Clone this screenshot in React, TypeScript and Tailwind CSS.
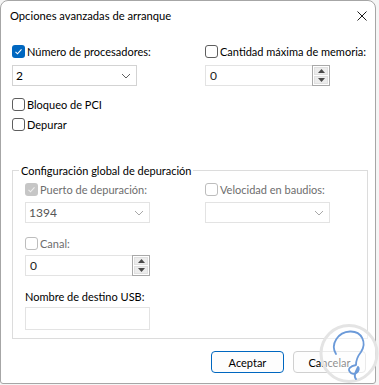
import React from "react";

function Box({ checked = false, disabled = false }: { checked?: boolean; disabled?: boolean }) {
  if (checked) {
    return (
      <span
        className={`w-[13px] h-[13px] rounded-[3px] flex items-center justify-center shrink-0 ${
          disabled ? "bg-[#c6c6c6]" : "bg-[#0067c0]"
        }`}
      >
        <svg width="9" height="9" viewBox="0 0 9 9">
          <polyline points="1.5,4.8 3.5,6.8 7.5,2.3" fill="none" stroke={disabled ? "#eeeeee" : "#ffffff"} strokeWidth="1.1" />
        </svg>
      </span>
    );
  }
  return (
    <span
      className={`w-[13px] h-[13px] rounded-[3px] border bg-white shrink-0 ${
        disabled ? "border-[#bdbdbd]" : "border-[#5e5e5e]"
      }`}
    />
  );
}

function CheckRow({
  label,
  checked,
  disabled,
}: {
  label: string;
  checked?: boolean;
  disabled?: boolean;
}) {
  return (
    <div className="h-[15px] flex items-center gap-[2px] whitespace-nowrap">
      <Box checked={checked} disabled={disabled} />
      <span className={`leading-[15px] ${disabled ? "text-[#6d6d6d]" : "text-black"}`}>{label}</span>
    </div>
  );
}

function Chevron({ light = false }: { light?: boolean }) {
  return (
    <svg width="10" height="6" viewBox="0 0 10 6">
      <polyline points="1,1 5,5 9,1" fill="none" stroke={light ? "#a8a8a8" : "#606060"} strokeWidth="1" />
    </svg>
  );
}

function Select({ value, disabled = false }: { value: string; disabled?: boolean }) {
  return (
    <div
      className={`w-[125px] h-[21px] border flex items-center justify-between pl-[3px] pr-[5px] bg-white ${
        disabled ? "border-[#e3e3e3] text-[#555555]" : "border-[#d3d3d3] text-black"
      }`}
    >
      <span className="leading-[15px] text-[12px]">{value}</span>
      <Chevron light={disabled} />
    </div>
  );
}

function Tri({ up }: { up: boolean }) {
  return (
    <svg width="7" height="4" viewBox="0 0 7 4">
      <polygon points={up ? "3.5,0 7,4 0,4" : "0,0 7,0 3.5,4"} fill="#4a4a4a" />
    </svg>
  );
}

function Spin({ value }: { value: string }) {
  return (
    <div className="w-[125px] h-[21px] flex bg-white">
      <div className="flex-1 border border-r-0 border-[#e3e3e3] flex items-center pl-[4px]">
        <span className="leading-[15px] text-[12px] text-[#222]">{value}</span>
      </div>
      <div className="w-[18px] border border-[#a9a9a9] flex flex-col gap-[1px] p-[1px] bg-white">
        <div className="flex-1 bg-[#ececec] border border-[#e0e0e0] flex items-center justify-center">
          <Tri up />
        </div>
        <div className="flex-1 bg-[#ececec] border border-[#e0e0e0] flex items-center justify-center">
          <Tri up={false} />
        </div>
      </div>
    </div>
  );
}

export default function App() {
  return (
    <div
      className="w-[379px] h-[385px] bg-[#f5f5f5] relative overflow-hidden text-[11px] text-black"
      style={{ fontFamily: 'Lato, "Liberation Sans", Arial, sans-serif' }}
    >
      <div className="w-[376px] h-[384px] bg-white border border-[#a6a6a6] rounded-t-[8px] rounded-b-[3px] flex flex-col">
        {/* Title bar */}
        <div className="h-[29px] flex items-center justify-between pl-[9px] pr-[8px]">
          <span className="leading-[15px] text-[11.2px]">Opciones avanzadas de arranque</span>
          <svg width="10" height="10" viewBox="0 0 10 10">
            <path d="M0.5 0.5 L9.5 9.5 M9.5 0.5 L0.5 9.5" stroke="#1a1a1a" strokeWidth="1" />
          </svg>
        </div>

        {/* Top options */}
        <div className="grid grid-cols-[193px_1fr] pl-[11px] pt-[14px]">
          <div className="flex flex-col">
            <CheckRow label="Número de procesadores:" checked />
            <div className="mt-[6px]">
              <Select value="2" />
            </div>
            <div className="mt-[11px]">
              <CheckRow label="Bloqueo de PCI" />
            </div>
            <div className="mt-[5px]">
              <CheckRow label="Depurar" />
            </div>
          </div>
          <div className="flex flex-col">
            <CheckRow label="Cantidad máxima de memoria:" />
            <div className="mt-[6px]">
              <Spin value="0" />
            </div>
          </div>
        </div>

        {/* Group box */}
        <div className="relative ml-[11px] mt-[38px] w-[356px] border border-[#dcdcdc] pt-[11px] pb-[8px] pl-[12px]">
          <span className="absolute left-[6px] -top-[8px] px-[2px] bg-white leading-[15px] whitespace-nowrap">
            Configuración global de depuración
          </span>
          <div className="grid grid-cols-[180px_1fr]">
            <div className="flex flex-col">
              <CheckRow label="Puerto de depuración:" checked disabled />
              <div className="mt-[5px]">
                <Select value="1394" disabled />
              </div>
              <div className="mt-[13px]">
                <CheckRow label="Canal:" disabled />
              </div>
              <div className="mt-[4px]">
                <Spin value="0" />
              </div>
              <div className="mt-[13px] h-[15px] leading-[15px] whitespace-nowrap">Nombre de destino USB:</div>
              <div className="mt-[3px] w-[125px] h-[23px] border border-[#e3e3e3] bg-white" />
            </div>
            <div className="flex flex-col">
              <CheckRow label="Velocidad en baudios:" disabled />
              <div className="mt-[5px]">
                <Select value="" disabled />
              </div>
            </div>
          </div>
        </div>

        {/* Buttons */}
        <div className="mt-[12px] flex justify-end gap-[9px] pr-[9px]">
          <button className="w-[73px] h-[22px] rounded-[4px] border border-[#0067c0] bg-[#fdfdfd] flex items-center justify-center leading-[15px]">
            Aceptar
          </button>
          <button className="w-[73px] h-[22px] rounded-[4px] border border-[#d0d0d0] bg-[#fdfdfd] flex items-center justify-center leading-[15px]">
            Cancelar
          </button>
        </div>
      </div>

      {/* Watermark */}
      <svg className="absolute left-[318px] top-[322px]" width="62" height="63" viewBox="318 322 62 63">
        <circle cx="349" cy="353.5" r="28" fill="rgba(255,255,255,0.55)" stroke="#e4e4e4" strokeWidth="3" />
        <path
          d="M336 354 C330 344 338 332 350 331.5 C362 331 367 343 361 352 C357 357 356 361 356 365 C351 366 346 369 351 373 C355 376 361 370 358 367 C356 371 353 376 356 379"
          fill="none"
          stroke="#6b9ad9"
          strokeWidth="1.8"
          strokeLinecap="round"
          strokeLinejoin="round"
        />
      </svg>
    </div>
  );
}
